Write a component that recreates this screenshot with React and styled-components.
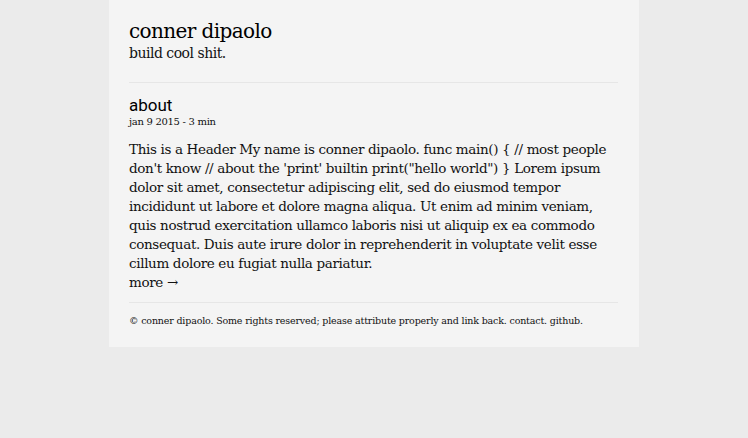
import React from 'react';
import styled, { createGlobalStyle } from 'styled-components';

const GlobalStyle = createGlobalStyle`
  html, body {
    margin: 0;
    padding: 0;
    background: #ebebeb;
  }
  body {
    font-family: "DejaVu Serif", "Liberation Serif", serif;
    color: #111;
  }
`;

const Page = styled.div`
  width: 530px;
  margin: 0 0 0 109px;
  background: #f4f4f4;
  padding: 18px 21px 19px 20px;
  box-sizing: border-box;
`;

const Masthead = styled.header`
  padding-bottom: 20px;
  border-bottom: 1px solid #e6e6e6;
`;

const SiteTitle = styled.h1`
  margin: 0;
  font-size: 20px;
  font-weight: normal;
  line-height: 26px;
  letter-spacing: -0.6px;
  color: #000;
`;

const Tagline = styled.div`
  font-size: 14px;
  line-height: 18px;
  letter-spacing: -0.5px;
`;

const Post = styled.article`
  padding: 12px 0 10px;
  border-bottom: 1px solid #e6e6e6;
`;

const PostTitle = styled.h2`
  margin: 0;
  font-family: Roboto, "Noto Sans", sans-serif;
  font-weight: 400;
  font-size: 17px;
  line-height: 20px;
  color: #000;
`;

const PostMeta = styled.div`
  font-size: 10px;
  line-height: 14px;
  letter-spacing: -0.3px;
  margin-bottom: 11px;
`;

const Body = styled.p`
  margin: 0;
  font-size: 13.5px;
  line-height: 19px;
  letter-spacing: -0.35px;
`;

const More = styled.a`
  display: block;
  font-size: 13.5px;
  line-height: 19px;
  letter-spacing: -0.35px;
  color: inherit;
  text-decoration: none;
`;

const Footer = styled.footer`
  padding-top: 11px;
  font-size: 9.5px;
  line-height: 14px;
  letter-spacing: -0.17px;
`;

export default function App() {
  return (
    <>
      <GlobalStyle />
      <Page>
        <Masthead>
          <SiteTitle>conner dipaolo</SiteTitle>
          <Tagline>build cool shit.</Tagline>
        </Masthead>
        <Post>
          <PostTitle>about</PostTitle>
          <PostMeta>jan 9 2015 - 3 min</PostMeta>
          <Body>
            {"This is a Header My name is conner dipaolo. func main() { // most people don't know // about the 'print' builtin print(\"hello world\") } Lorem ipsum dolor sit amet, consectetur adipiscing elit, sed do eiusmod tempor incididunt ut labore et dolore magna aliqua. Ut enim ad minim veniam, quis nostrud exercitation ullamco laboris nisi ut aliquip ex ea commodo consequat. Duis aute irure dolor in reprehenderit in voluptate velit esse cillum dolore eu fugiat nulla pariatur."}
          </Body>
          <More href="#">more →</More>
        </Post>
        <Footer>
          © conner dipaolo. Some rights reserved; please attribute properly and link back. contact. github.
        </Footer>
      </Page>
    </>
  );
}
